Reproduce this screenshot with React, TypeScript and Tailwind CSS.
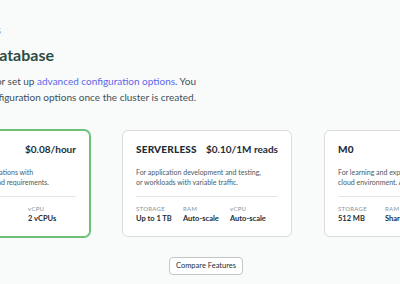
import type { ReactNode } from 'react';

type Spec = { label: string; value: string };

type Tier = {
  name: string;
  price: string;
  lines: string[];
  specs: Spec[];
  selected?: boolean;
};

const tiers: Tier[] = [
  {
    name: 'M10',
    price: '$0.08/hour',
    lines: ['For production applications with', 'sophisticated workload requirements.'],
    specs: [
      { label: 'Storage', value: '10 GB' },
      { label: 'RAM', value: '2 GB' },
      { label: 'vCPU', value: '2 vCPUs' },
    ],
    selected: true,
  },
  {
    name: 'SERVERLESS',
    price: '$0.10/1M reads',
    lines: ['For application development and testing,', 'or workloads with variable traffic.'],
    specs: [
      { label: 'Storage', value: 'Up to 1 TB' },
      { label: 'RAM', value: 'Auto-scale' },
      { label: 'vCPU', value: 'Auto-scale' },
    ],
  },
  {
    name: 'M0',
    price: 'FREE',
    lines: ['For learning and exploring MongoDB in a', 'cloud environment. Always free!'],
    specs: [
      { label: 'Storage', value: '512 MB' },
      { label: 'RAM', value: 'Shared' },
      { label: 'vCPU', value: 'Shared' },
    ],
  },
];

// 왼쪽이 잘린 줄: 오른쪽 끝에 맞춰 표시
function ClipLine({ width, className, children }: { width: string; className: string; children: ReactNode }) {
  return (
    <div className={`flex justify-end overflow-hidden whitespace-nowrap ${width} ${className}`}>
      <span className="shrink-0">{children}</span>
    </div>
  );
}

function TierCard({ tier }: { tier: Tier }) {
  return (
    <div
      className={`flex h-[107px] w-[170px] shrink-0 flex-col rounded-[6px] border bg-white px-[13px] pt-[11px] ${
        tier.selected ? 'border-[#6cc177] ring-1 ring-[#6cc177]' : 'border-[#d9dcdc]'
      }`}
    >
      <div className="flex h-[14px] items-center justify-between text-[10px] font-black text-[#1c2d38]">
        <span className="tracking-[0.2px]">{tier.name}</span>
        <span className="font-bold">{tier.price}</span>
      </div>
      <div className="mt-[11px] text-[7px] leading-[10px] text-[#4a5a63]">
        {tier.lines.map((l) => (
          <div key={l} className="whitespace-nowrap">
            {l}
          </div>
        ))}
      </div>
      <div className="mt-[9px] border-t border-[#e2e5e5]" />
      <div className="mt-[8px] flex">
        {tier.specs.map((s) => (
          <div key={s.label} className="w-[47px] shrink-0 whitespace-nowrap">
            <div className={`h-[8px] text-[6px] leading-[8px] tracking-[0.3px] text-[#889397] ${s.label === 'vCPU' ? '' : 'uppercase'}`}>
              {s.label}
            </div>
            <div className="mt-[1px] h-[10px] text-[7.5px] font-bold leading-[10px] text-[#1c2d38]">{s.value}</div>
          </div>
        ))}
      </div>
    </div>
  );
}

export default function App() {
  return (
    <div className="h-[284px] w-[400px] overflow-hidden bg-[#f9fbfa] font-['Lato',sans-serif]">
      <ClipLine width="w-[1px]" className="mt-[24px] h-[12px] text-[11px] leading-[12px] text-[#889397]">
        Data Services
      </ClipLine>

      <ClipLine width="w-[54px]" className="mt-[9px] h-[20px] text-[16px] font-bold leading-[20px] text-[#2d4b44]">
        Deploy your database
      </ClipLine>

      <div className="mt-[8px] text-[10px] leading-[16px] text-[#3d4f58]">
        <ClipLine width="w-[196px]" className="">
          Choose a template below or set up{' '}
          <span className="text-[#5b67e6]">advanced configuration options</span>. You
        </ClipLine>
        <ClipLine width="w-[196px]" className="">
          can also edit these configuration options once the cluster is created.
        </ClipLine>
      </div>

      <div className="ml-[-80px] mt-[25px] flex gap-8">
        {tiers.map((t) => (
          <TierCard key={t.name} tier={t} />
        ))}
      </div>

      <button className="ml-[169px] mt-[20px] flex h-[18px] w-[74px] items-center justify-center rounded-[4px] border border-[#c1c7c6] bg-white text-[7.5px] text-[#1c2d38]">
        Compare Features
      </button>
    </div>
  );
}
